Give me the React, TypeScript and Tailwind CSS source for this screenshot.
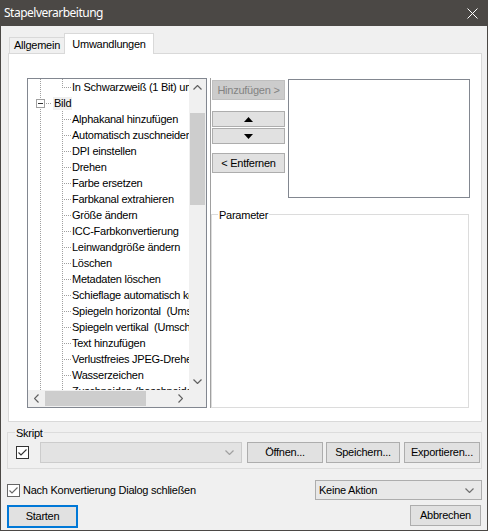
import React from 'react';

const sans = "font-['Liberation_Sans',Arial,sans-serif]";

const bildItems = [
  'Alphakanal hinzufügen',
  'Automatisch zuschneiden',
  'DPI einstellen',
  'Drehen',
  'Farbe ersetzen',
  'Farbkanal extrahieren',
  'Größe ändern',
  'ICC-Farbkonvertierung',
  'Leinwandgröße ändern',
  'Löschen',
  'Metadaten löschen',
  'Schieflage automatisch korrigieren',
  'Spiegeln horizontal  (Umschalt+H)',
  'Spiegeln vertikal  (Umschalt+V)',
  'Text hinzufügen',
  'Verlustfreies JPEG-Drehen',
  'Wasserzeichen',
  'Zuschneiden (beschneiden)',
];

// dotted tree connectors for a second-level row
function ChildLines({ last }: { last?: boolean }) {
  return (
    <svg width="44" height="16" className="shrink-0" shapeRendering="crispEdges">
      <line x1="12.5" y1="0" x2="12.5" y2="16" stroke="#a0a0a0" strokeDasharray="1 1" />
      <line x1="34.5" y1="0" x2="34.5" y2={last ? 9 : 16} stroke="#a0a0a0" strokeDasharray="1 1" />
      <line x1="36" y1="8.5" x2="43" y2="8.5" stroke="#a0a0a0" strokeDasharray="1 1" />
    </svg>
  );
}

function RootLines() {
  return (
    <svg width="25" height="16" className="shrink-0" shapeRendering="crispEdges">
      <line x1="12.5" y1="0" x2="12.5" y2="16" stroke="#a0a0a0" strokeDasharray="1 1" />
      <rect x="8.5" y="4.5" width="8" height="8" fill="#fff" stroke="#a0a0a0" />
      <line x1="10" y1="8.5" x2="15" y2="8.5" stroke="#333" />
      <line x1="18" y1="8.5" x2="24" y2="8.5" stroke="#a0a0a0" strokeDasharray="1 1" />
    </svg>
  );
}

function Chevron({ dir, color = '#606060' }: { dir: 'up' | 'down' | 'left' | 'right'; color?: string }) {
  const pts = {
    up: '0.5,4.5 4.5,0.5 8.5,4.5',
    down: '0.5,0.5 4.5,4.5 8.5,0.5',
    left: '4.5,0.5 0.5,4.5 4.5,8.5',
    right: '0.5,0.5 4.5,4.5 0.5,8.5',
  }[dir];
  const vertical = dir === 'up' || dir === 'down';
  return (
    <svg width={vertical ? 9 : 5} height={vertical ? 5 : 9}>
      <polyline points={pts} fill="none" stroke={color} strokeWidth="1.2" />
    </svg>
  );
}

function CheckBox({ color = '#333' }: { color?: string }) {
  return (
    <svg width="13" height="13" className="shrink-0" shapeRendering="crispEdges">
      <rect x="0.5" y="0.5" width="12" height="12" fill="#fff" stroke={color} />
      <polyline points="2.5,6.5 5,9 10.5,3.5" fill="none" stroke={color} strokeWidth="1.1" shapeRendering="auto" />
    </svg>
  );
}

function Button({ children, className = '' }: { children: React.ReactNode; className?: string }) {
  return (
    <div className={`h-[21px] flex items-center justify-center bg-[#e1e1e1] border border-[#adadad] ${className}`}>
      {children}
    </div>
  );
}

function Tree() {
  return (
    <div className="w-[180px] h-[330px] border border-[#828790] flex flex-col bg-white">
      <div className="flex flex-1 min-h-0">
        <div className="flex-1 overflow-hidden">
          <div className="flex items-center h-[16px] whitespace-nowrap">
            <ChildLines last />
            <span>In Schwarzweiß (1 Bit) umwandeln</span>
          </div>
          <div className="flex items-center h-[16px] whitespace-nowrap">
            <RootLines />
            <span className="bg-[#f0f0f0] px-[1px] leading-[13px]">Bild</span>
          </div>
          {bildItems.map((t) => (
            <div key={t} className="flex items-center h-[16px] whitespace-pre">
              <ChildLines />
              <span>{t}</span>
            </div>
          ))}
        </div>
        <div className="w-[17px] bg-[#f0f0f0] flex flex-col">
          <div className="h-[17px] flex items-center justify-center">
            <Chevron dir="up" />
          </div>
          <div className="flex-1 px-px">
            <div className="mt-[17px] h-[92px] bg-[#cdcdcd]" />
          </div>
          <div className="h-[17px] flex items-center justify-center">
            <Chevron dir="down" />
          </div>
        </div>
      </div>
      <div className="h-[17px] flex">
        <div className="flex-1 bg-[#f0f0f0] flex items-center">
          <div className="w-[17px] flex justify-center">
            <Chevron dir="left" />
          </div>
          <div className="h-[15px] w-[101px] bg-[#cdcdcd]" />
          <div className="flex-1" />
          <div className="w-[17px] flex justify-center">
            <Chevron dir="right" />
          </div>
        </div>
        <div className="w-[17px] bg-[#f0f0f0]" />
      </div>
    </div>
  );
}

export default function App() {
  return (
    <div className={`w-[488px] h-[531px] bg-[#4b4845] px-px pb-px flex flex-col ${sans} text-[11px] tracking-[-0.25px] text-black`}>
      {/* title bar */}
      <div className="h-[26px] flex items-center justify-between pl-[3px] pr-[9px] text-white text-[12px] tracking-[-0.5px] font-['Noto_Sans',sans-serif]">
        <span>Stapelverarbeitung</span>
        <svg width="11" height="11" viewBox="0 0 11 11">
          <path d="M0.5 0.5 L10.5 10.5 M10.5 0.5 L0.5 10.5" stroke="#fff" strokeWidth="1" />
        </svg>
      </div>

      <div className="flex-1 bg-[#f0f0f0] flex flex-col">
        {/* tabs */}
        <div className="pt-[7px] pl-[8px] flex items-end h-[27px]">
          <div className="w-[55px] h-[16px] border-t border-l border-[#d9d9d9] flex items-center justify-center">
            Allgemein
          </div>
          <div className="relative z-10 -mb-px w-[90px] h-[21px] border-t border-l border-r border-[#d9d9d9] bg-white flex items-center justify-center">
            Umwandlungen
          </div>
        </div>

        {/* tab page */}
        <div className="ml-[7px] w-[474px] h-[369px] border border-[#d9d9d9] bg-white flex pl-[18px] pt-[24px]">
          <Tree />
          <div className="ml-[3px] h-[330px] border-l border-[#a0a0a0] flex flex-col">
            <div className="flex">
              <div className="ml-px pt-[2px] w-[73px] flex flex-col">
                <div className="h-[20px] flex items-center justify-center bg-[#cccccc] border border-[#bfbfbf] text-[#838383]">
                  Hinzufügen &gt;
                </div>
                <Button className="mt-[11px] !h-[16px]">
                  <svg width="9" height="5"><polygon points="0,5 4.5,0 9,5" fill="#000" /></svg>
                </Button>
                <Button className="mt-px !h-[16px]">
                  <svg width="9" height="5"><polygon points="0,0 4.5,5 9,0" fill="#000" /></svg>
                </Button>
                <Button className="mt-[9px] !h-[20px]">&lt; Entfernen</Button>
              </div>
              <div className="ml-[3px] mt-px w-[182px] h-[119px] border border-[#828790] bg-white" />
            </div>
            <div className="relative mt-[16px] w-[258px] h-[195px] border border-[#dcdcdc]">
              <span className="absolute -top-[8px] left-[6px] bg-white px-px">Parameter</span>
            </div>
          </div>
        </div>

        {/* Skript group */}
        <div className="relative mt-[10px] ml-[6px] w-[475px] h-[37px] border border-[#dcdcdc] flex items-start pl-[8px] pt-[9px]">
          <span className="absolute -top-[8px] left-[7px] bg-[#f0f0f0] px-px">Skript</span>
          <div className="h-[21px] flex items-center">
            <CheckBox />
          </div>
          <div className="ml-[11px] w-[202px] h-[21px] bg-[#e3e3e3] border border-[#cccccc] flex items-center justify-end pr-[7px]">
            <Chevron dir="down" color="#a0a0a0" />
          </div>
          <Button className="ml-[5px] w-[76px]">Öffnen...</Button>
          <Button className="ml-[3px] w-[74px]">Speichern...</Button>
          <Button className="ml-[4px] w-[76px]">Exportieren...</Button>
        </div>

        {/* close option + action */}
        <div className="mt-[11px] ml-[6px] mr-[5px] h-[20px] flex items-center justify-between">
          <div className="flex items-center gap-[3px]">
            <CheckBox color="#666" />
            <span>Nach Konvertierung Dialog schließen</span>
          </div>
          <div className="w-[167px] h-[20px] bg-[#e8e8e8] border border-[#adadad] flex items-center justify-between pl-[3px] pr-[7px]">
            <span>Keine Aktion</span>
            <Chevron dir="down" color="#707070" />
          </div>
        </div>

        {/* buttons */}
        <div className="mt-[5px] ml-[6px] mr-[6px] flex items-start justify-between">
          <div className="w-[71px] h-[23px] flex items-center justify-center bg-[#e1e1e1] border-2 border-[#0078d7]">
            Starten
          </div>
          <Button className="w-[71px] !h-[21px]">Abbrechen</Button>
        </div>
      </div>
    </div>
  );
}
